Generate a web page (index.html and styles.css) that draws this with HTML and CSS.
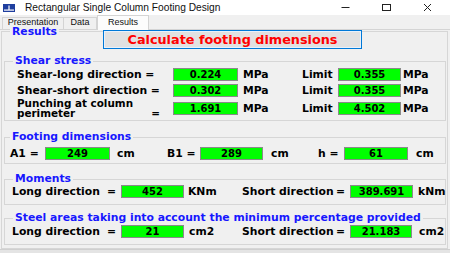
FILE: index.html
```html
<!DOCTYPE html>
<html>
<head>
<meta charset="utf-8">
<link rel="stylesheet" href="styles.css">
</head>
<body>
<div class="titlebar">
  <svg class="appicon" width="12" height="8" viewBox="0 0 12 8"><rect x="0" y="0" width="12" height="8" fill="#1f3f9f"/><rect x="1" y="5.5" width="10" height="1.2" fill="#fff"/><rect x="5.4" y="1.5" width="1.2" height="4.5" fill="#fff"/></svg>
  <span class="title">Rectangular Single Column Footing Design</span>
  <div class="controls">
    <span class="ctl"><svg width="9" height="9" viewBox="0 0 9 9"><line x1="0.5" y1="4.5" x2="8.5" y2="4.5" stroke="#222" stroke-width="1"/></svg></span>
    <span class="ctl"><svg width="9" height="9" viewBox="0 0 9 9"><rect x="0.5" y="1.5" width="8" height="6" fill="none" stroke="#222" stroke-width="1"/></svg></span>
    <span class="ctl"><svg width="9" height="9" viewBox="0 0 9 9"><path d="M1 1 L8 8 M8 1 L1 8" stroke="#222" stroke-width="1"/></svg></span>
  </div>
</div>
<div class="tabs">
  <div class="tab t1">Presentation</div>
  <div class="tab t2">Data</div>
  <div class="tab t3 active">Results</div>
</div>
<div class="results">
  <div class="head">
    <span class="legend">Results</span>
    <button class="calc">Calculate footing dimensions</button>
  </div>

  <div class="group shear">
    <div class="legend">Shear stress</div>
    <div class="row r1">
      <span class="lbl w156">Shear-long direction =</span>
      <span class="val w65">0.224</span>
      <span class="unit g5 w59">MPa</span>
      <span class="lbl w36">Limit</span>
      <span class="val w63">0.355</span>
      <span class="unit g2">MPa</span>
    </div>
    <div class="row r2">
      <span class="lbl w156">Shear-short direction =</span>
      <span class="val w65">0.302</span>
      <span class="unit g5 w59">MPa</span>
      <span class="lbl w36">Limit</span>
      <span class="val w63">0.355</span>
      <span class="unit g2">MPa</span>
    </div>
    <div class="row r3">
      <span class="lbl w156"><span class="two"><span class="pl">Punching at column<br>perimeter</span><span class="peq">=</span></span></span>
      <span class="val w65">1.691</span>
      <span class="unit g5 w59">MPa</span>
      <span class="lbl w36">Limit</span>
      <span class="val w63">4.502</span>
      <span class="unit g2">MPa</span>
    </div>
  </div>

  <div class="group footing">
    <div class="legend">Footing dimensions</div>
    <div class="row fr">
      <span class="lbl w35">A1 =</span>
      <span class="val w65">249</span>
      <span class="unit g7 w50">cm</span>
      <span class="lbl w33">B1 =</span>
      <span class="val w63">289</span>
      <span class="unit g8 w47">cm</span>
      <span class="lbl w26">h =</span>
      <span class="val w64">61</span>
      <span class="unit g8">cm</span>
    </div>
  </div>

  <div class="group moments">
    <div class="legend">Moments</div>
    <div class="row mr">
      <span class="lbl eq w109"><span>Long direction</span><span>=</span></span>
      <span class="val w63">452</span>
      <span class="unit g4 w54">KNm</span>
      <span class="lbl eq w108"><span>Short direction</span><span>=</span></span>
      <span class="val w63">389.691</span>
      <span class="unit g5">kNm</span>
    </div>
  </div>

  <div class="group steel">
    <div class="legend">Steel areas taking into account the minimum percentage provided</div>
    <div class="row sr">
      <span class="lbl eq w109"><span>Long direction</span><span>=</span></span>
      <span class="val w63">21</span>
      <span class="unit g5 w53">cm2</span>
      <span class="lbl eq w108"><span>Short direction</span><span>=</span></span>
      <span class="val w62">21.183</span>
      <span class="unit g7">cm2</span>
    </div>
  </div>
</div>
<div class="bottom"></div>
</body>
</html>
```

FILE: styles.css
```css
* { box-sizing: border-box; margin: 0; padding: 0; }
html, body { width: 450px; height: 253px; overflow: hidden; }
body { background: #f0f0f0; font-family: "DejaVu Sans", sans-serif; color: #000; }

.titlebar { height: 15px; background: #fff; display: flex; align-items: center; }
.appicon { margin-left: 3px; display: block; }
.title { margin-left: 10px; font: 10.2px/15px "Liberation Sans", Arial, sans-serif; color: #111; white-space: nowrap; }
.controls { margin-left: auto; margin-right: 2px; display: flex; }
.ctl { width: 41px; height: 15px; display: flex; align-items: center; justify-content: center; }
.ctl svg { display: block; }

.tabs { height: 15px; display: flex; align-items: flex-end; padding-left: 2px; border-bottom: 1px solid #d4d4d4; }
.tab { height: 12px; border: 1px solid #d4d4d4; border-bottom: none; font: 9px/8px "Liberation Sans", Arial, sans-serif; text-align: center; color: #111; background: #f0f0f0; }
.t1 { width: 62px; }
.t2 { width: 33px; border-left: none; }
.t3 { width: 52px; }
.tab.active { height: 15px; margin-bottom: -1px; background: #fcfcfc; line-height: 12px; position: relative; }

.results { margin: 1px 0 0 1px; width: 447px; border: 1px solid #d6d6d6; padding-bottom: 3px; }
.head { display: grid; grid-template-columns: 101px 259px; margin-top: -5px; align-items: start; }
.legend { height: 10px; line-height: 10px; width: fit-content; padding: 0 2px; background: #f0f0f0; color: #1717ff; font-weight: bold; font-size: 10.8px; white-space: nowrap; }
.head .legend { margin-left: 8px; height: 8px; line-height: 9px; }
.calc { margin-top: 3px; height: 19px; width: 259px; background: #e1e1e1; border: 1px solid #0078d7; box-shadow: inset 0 0 0 1px #e8f1fb; color: #ff0000; font-family: "DejaVu Sans", sans-serif; font-weight: bold; font-size: 12.8px; line-height: 16px; text-align: center; }

.group { margin-left: 2px; width: 442px; border: 1px solid #d6d6d6; }
.group .legend { margin: -6px 0 0 8px; }
.shear { margin-top: 12px; padding-bottom: 2px; }
.footing { margin-top: 16px; padding-bottom: 3px; }
.footing .legend { margin-left: 5px; }
.moments { margin-top: 15px; padding-bottom: 6px; }
.steel { margin-top: 13px; padding-bottom: 6px; }

.row { display: flex; align-items: center; height: 13px; font-weight: bold; font-size: 10.8px; white-space: nowrap; }
.shear .row { padding-left: 12px; }
.r1 { margin-top: 2px; }
.r2 { margin-top: 3px; }
.r3 { height: 20px; margin-top: 1px; }
.fr { margin-top: 5px; padding-left: 5px; }
.mr { margin-top: 1px; padding-left: 7px; }
.sr { margin-top: 2px; padding-left: 7px; }

.lbl { display: block; flex: none; line-height: 13px; }
.eq { display: flex; justify-content: space-between; padding-right: 5px; }
.two { display: flex; align-items: flex-end; justify-content: space-between; width: 143px; line-height: 10px; font-size: 10.4px; }
.pl { display: block; }
.peq { display: block; line-height: 10px; }
.unit { flex: none; line-height: 13px; }

.val { flex: none; height: 13px; background: #00ff00; border: 1px solid #8a8a8a; font-size: 10px; line-height: 11px; text-align: center; font-weight: bold; color: #000; }

.w26 { width: 26px; } .w33 { width: 33px; } .w35 { width: 35px; } .w36 { width: 36px; }
.w47 { width: 47px; } .w50 { width: 50px; } .w53 { width: 53px; } .w54 { width: 54px; }
.w59 { width: 59px; } .w62 { width: 62px; } .w63 { width: 63px; } .w64 { width: 64px; }
.w65 { width: 65px; } .w108 { width: 108px; } .w109 { width: 109px; } .w156 { width: 156px; }
.g2 { margin-left: 2px; } .g4 { margin-left: 4px; } .g5 { margin-left: 5px; } .g7 { margin-left: 7px; } .g8 { margin-left: 8px; }

.bottom { height: 5px; border-top: 1px solid #cfcfcf; background: #e4e4e4; }
```
